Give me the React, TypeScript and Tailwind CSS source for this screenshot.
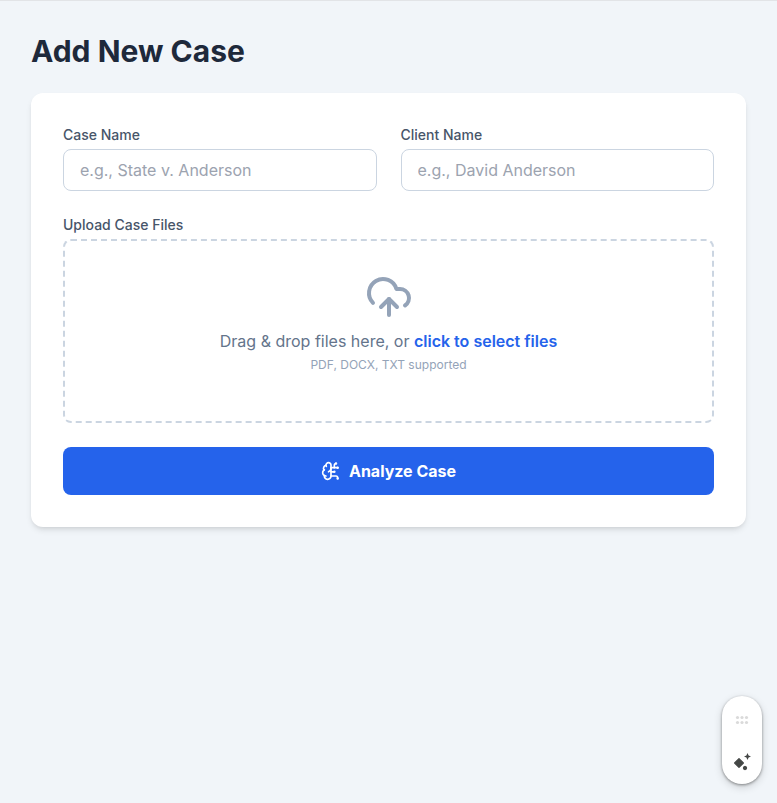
import { BrainCircuit, CloudUpload } from "lucide-react";

function Field({ label, placeholder }: { label: string; placeholder: string }) {
  return (
    <label className="block min-w-0">
      <span className="mb-1 block text-sm font-medium text-[#475569]">{label}</span>
      <input
        type="text"
        placeholder={placeholder}
        className="block h-[42px] w-full rounded-lg border border-[#cbd5e1] bg-white px-4 text-base text-[#1e293b] outline-none placeholder:text-[#9ca3af]"
      />
    </label>
  );
}

function FloatingTools() {
  return (
    <div className="fixed right-[15px] bottom-[19px] flex h-[88px] w-10 flex-col items-center rounded-full bg-white shadow-[0_1px_3px_rgba(0,0,0,0.4),0_3px_8px_rgba(0,0,0,0.16)]">
      <svg className="mt-[19px]" width="14" height="10" viewBox="0 0 14 10" fill="#dadada">
        <circle cx="2.5" cy="2.5" r="1.6" />
        <circle cx="7" cy="2.5" r="1.6" />
        <circle cx="11.5" cy="2.5" r="1.6" />
        <circle cx="2.5" cy="7.5" r="1.6" />
        <circle cx="7" cy="7.5" r="1.6" />
        <circle cx="11.5" cy="7.5" r="1.6" />
      </svg>
      <svg className="mt-[27px]" width="20" height="20" viewBox="0 0 20 20" fill="#444746">
        <path d="M7 6.6L11.4 11L7 15.4L2.6 11Z" stroke="#444746" strokeWidth="1.2" strokeLinejoin="round" />
        <path d="M15.5 1L16.6 3.4L19 4.5L16.6 5.6L15.5 8L14.4 5.6L12 4.5L14.4 3.4Z" />
        <path d="M13 13.8L14.6 14.4L15.2 16L14.6 17.6L13 18.2L11.4 17.6L10.8 16L11.4 14.4Z" />
      </svg>
    </div>
  );
}

export default function App() {
  return (
    <div className="min-h-screen border-t border-[#e2e4e7] bg-[#f1f5f9] px-[31px] pt-8 font-[Inter,sans-serif]">
      <h1 className="mb-6 text-3xl leading-9 font-bold text-[#1e293b]">Add New Case</h1>
      <form className="rounded-xl bg-white p-8 shadow-md">
        <div className="mb-6 grid grid-cols-2 gap-6">
          <Field label="Case Name" placeholder="e.g., State v. Anderson" />
          <Field label="Client Name" placeholder="e.g., David Anderson" />
        </div>
        <div className="mb-6">
          <div className="mb-1 text-sm font-medium text-[#475569]">Upload Case Files</div>
          <div className="flex h-[184px] flex-col items-center rounded-lg border-2 border-dashed border-[#cbd5e1] p-8">
            <CloudUpload size={48} className="mb-2 shrink-0 text-[#94a3b8]" />
            <p className="text-base text-[#64748b]">
              Drag &amp; drop files here, or{" "}
              <span className="font-semibold text-[#2563eb]">click to select files</span>
            </p>
            <p className="mt-1 text-xs text-[#94a3b8]">PDF, DOCX, TXT supported</p>
          </div>
        </div>
        <button
          type="button"
          className="flex h-12 w-full items-center justify-center rounded-lg bg-[#2563eb] text-base font-bold text-white"
        >
          <BrainCircuit size={20} className="mr-2" />
          Analyze Case
        </button>
      </form>
      <FloatingTools />
    </div>
  );
}
